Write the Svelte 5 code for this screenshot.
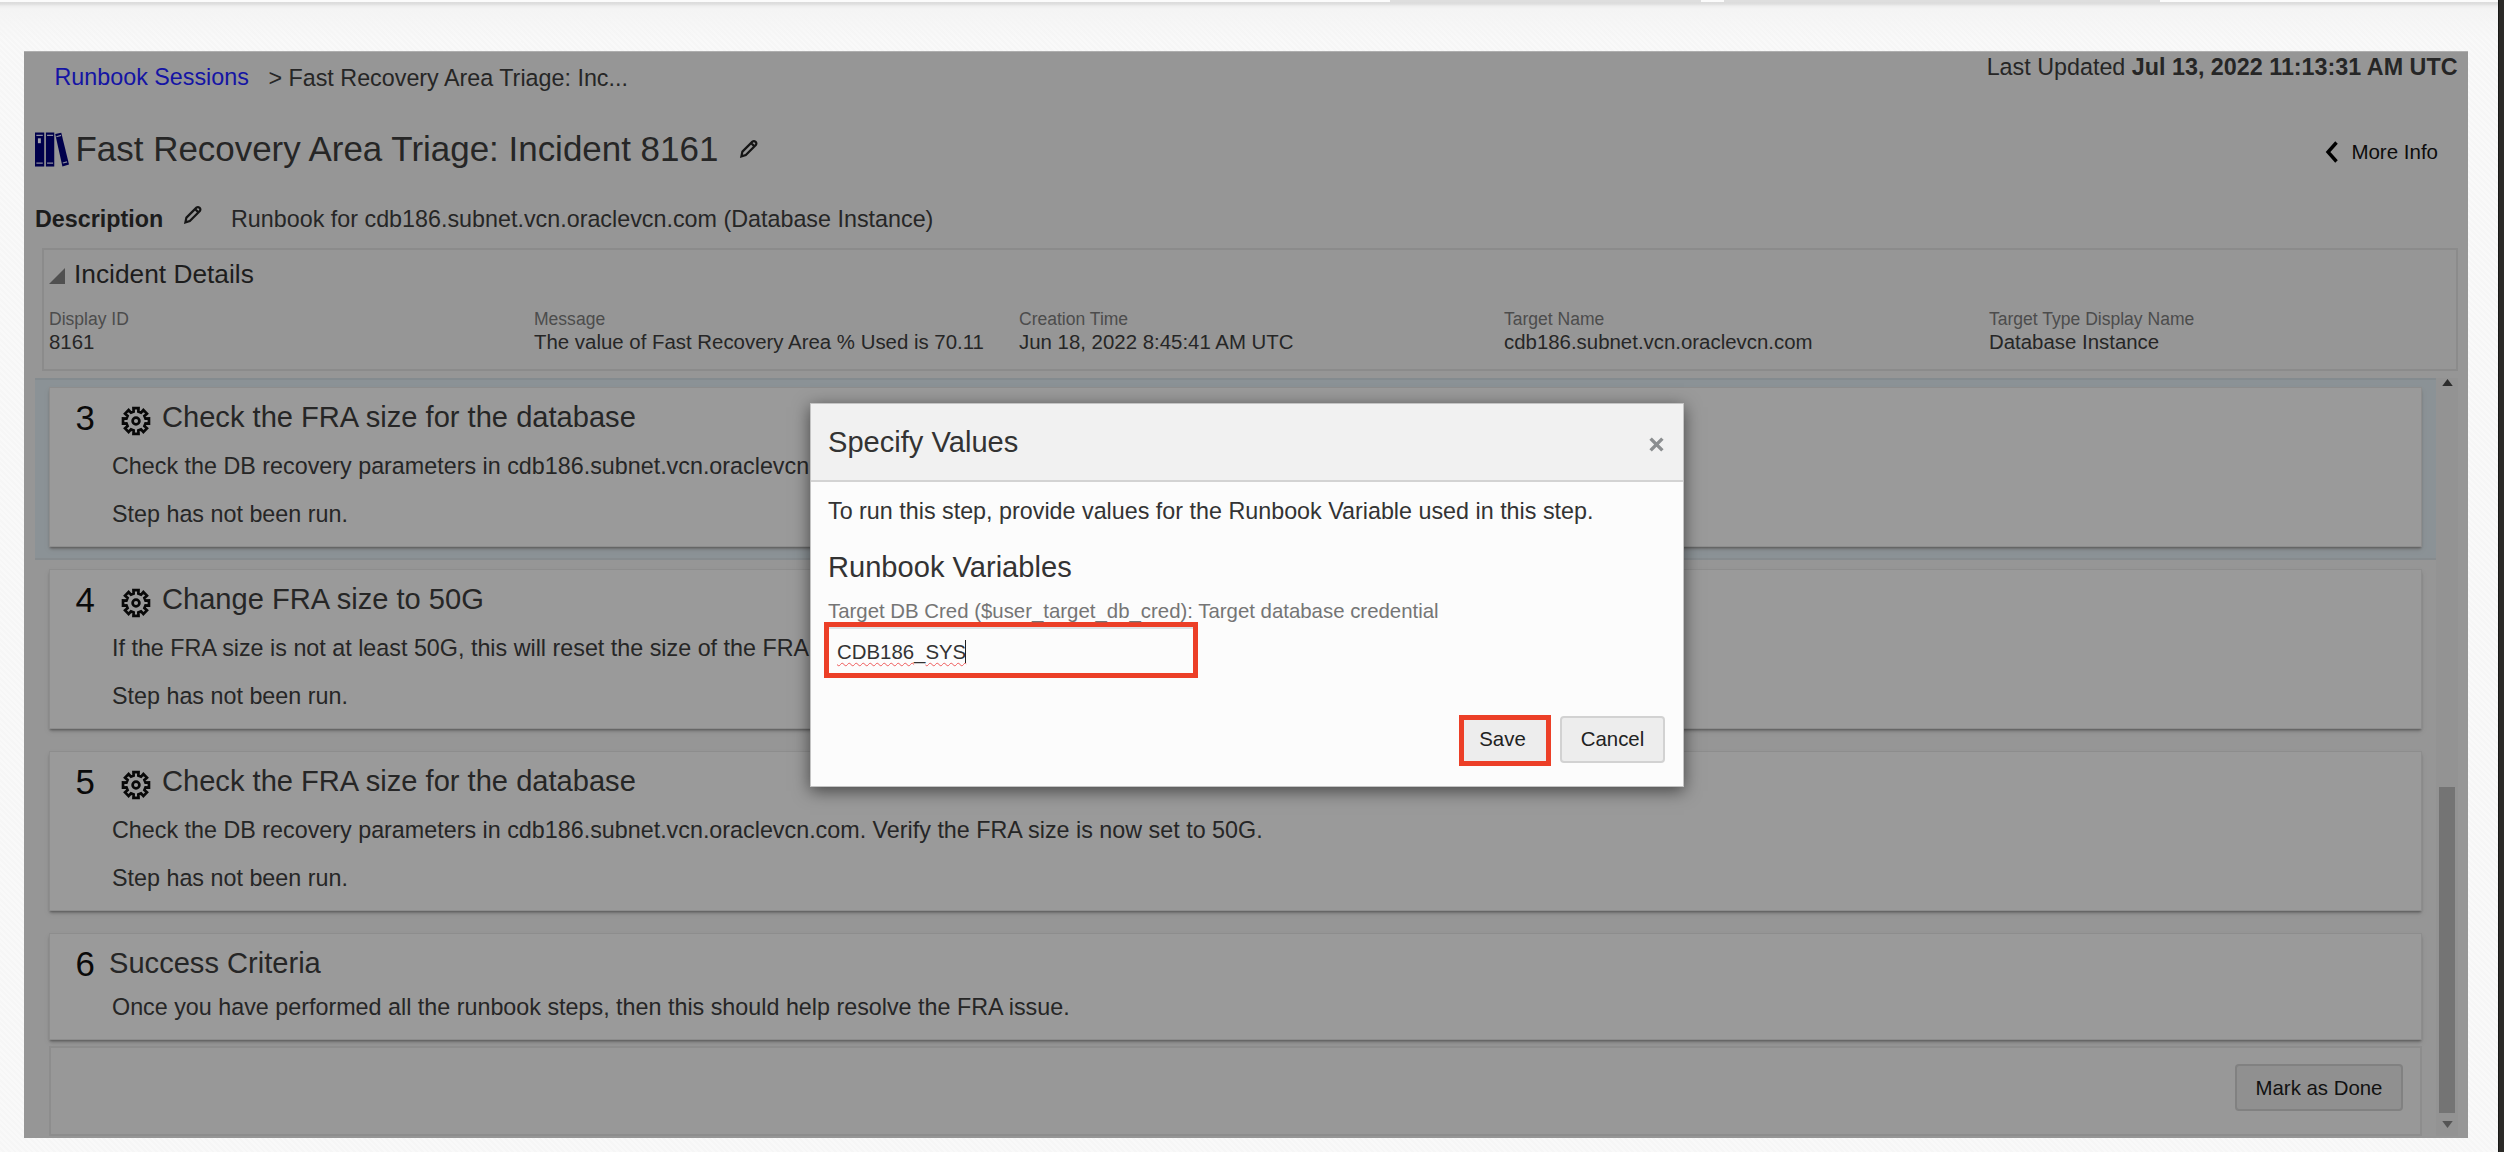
<script>
  const facts = [
    ['Display ID', '8161'],
    ['Message', 'The value of Fast Recovery Area % Used is 70.11'],
    ['Creation Time', 'Jun 18, 2022 8:45:41 AM UTC'],
    ['Target Name', 'cdb186.subnet.vcn.oraclevcn.com'],
    ['Target Type Display Name', 'Database Instance']
  ];
  const steps = [
    { n: 3, title: 'Check the FRA size for the database', active: true, lines: ['Check the DB recovery parameters in cdb186.subnet.vcn.oraclevcn.com.', 'Step has not been run.'] },
    { n: 4, title: 'Change FRA size to 50G', lines: ['If the FRA size is not at least 50G, this will reset the size of the FRA', 'Step has not been run.'] },
    { n: 5, title: 'Check the FRA size for the database', lines: ['Check the DB recovery parameters in cdb186.subnet.vcn.oraclevcn.com. Verify the FRA size is now set to 50G.', 'Step has not been run.'] }
  ];
  let value = $state('CDB186_SYS');

  // Outline of an eight-toothed gear, centred on 16,16
  const gear = Array.from({ length: 8 }, (_, i) => {
    return [[-14, 9.8], [-11, 13.2], [11, 13.2], [14, 9.8]].map(([d, r]) => {
      const a = ((i * 45 + d - 90) * Math.PI) / 180;
      return `${(16 + r * Math.cos(a)).toFixed(2)},${(16 + r * Math.sin(a)).toFixed(2)}`;
    }).join(' ');
  }).join(' ');
</script>

{#snippet pencil()}
  <svg class="pencil" viewBox="0 0 20 20"><path d="M2.4 17.4 L3.4 12.6 L13.4 2.6 Q15 1.4 16.6 2.8 Q18 4.4 16.8 6 L6.8 16 Z M12 4 L15.5 7.4" /></svg>
{/snippet}

<div class="page">
  <div class="topbar"><i></i><i></i></div>
  <main class="panel">
    <header>
      <div class="crumbs"><a href="#sessions">Runbook Sessions</a><span>&gt; Fast Recovery Area Triage: Inc...</span></div>
      <div class="updated">Last Updated <b>Jul 13, 2022 11:13:31 AM UTC</b></div>
    </header>
    <div class="titlebar">
      <svg class="books" viewBox="0 0 36 36">
        <rect x="0" y="0" width="9.5" height="35" /><rect x="11.2" y="0" width="8.6" height="35" />
        <path d="M20.8 1.6 L27 .2 L35 33 L28.2 35 Z" />
        <path class="detail" d="M1.4 3H8M1.4 31.5H8M12.4 3H18.6M12.4 31.5H18.6M22 4.4L26.8 3M28.6 31.4L33 30.2" />
        <rect class="tag" x="3" y="6" width="3" height="5" />
      </svg>
      <h1>Fast Recovery Area Triage: Incident 8161</h1>
      {@render pencil()}
      <div class="more"><svg viewBox="0 0 14 22"><path d="M12.5 1.5 L4 11 L12.5 20.5" /></svg>More Info</div>
    </div>
    <div class="desc"><b>Description</b>{@render pencil()}<span>Runbook for cdb186.subnet.vcn.oraclevcn.com (Database Instance)</span></div>

    <section class="incident">
      <h2><svg viewBox="0 0 16 16"><path d="M16 0V16H0Z" /></svg>Incident Details</h2>
      <dl>
        {#each facts as [k, v]}<div><dt>{k}</dt><dd>{v}</dd></div>{/each}
      </dl>
    </section>

    <div class="scroller">
      <div class="steps">
        {#each steps as s}
          <div class="band" class:active={s.active}>
            <article>
              <div class="head"><span class="num">{s.n}</span>
                <svg class="gear" viewBox="0 0 32 32"><polygon points={gear} /><circle cx="16" cy="16" r="3.4" /></svg>
                <h3>{s.title}</h3></div>
              {#each s.lines as l}<p>{l}</p>{/each}
            </article>
          </div>
        {/each}
        <div class="band last">
          <article>
            <div class="head"><span class="num">6</span><h3>Success Criteria</h3></div>
            <p>Once you have performed all the runbook steps, then this should help resolve the FRA issue.</p>
          </article>
        </div>
        <div class="foot"><button>Mark as Done</button></div>
      </div>
      <div class="track">
        <svg viewBox="0 0 12 8"><path d="M0 8L6 0L12 8Z" /></svg>
        <div class="thumb"></div>
        <svg class="down" viewBox="0 0 12 8"><path d="M0 0L6 8L12 0Z" /></svg>
      </div>
    </div>
  </main>
  <div class="edge"></div>

  <div class="modal">
    <div class="mhead"><h3>Specify Values</h3><svg viewBox="0 0 14 14"><path d="M1.5 1.5L12.5 12.5M12.5 1.5L1.5 12.5" /></svg></div>
    <div class="mbody">
      <p>To run this step, provide values for the Runbook Variable used in this step.</p>
      <h3>Runbook Variables</h3>
      <div class="label">Target DB Cred ($user_target_db_cred): Target database credential</div>
      <div class="field"><span class="misspelt">{value.slice(0, 6)}</span>_<span class="misspelt">{value.slice(7)}</span><i></i></div>
      <div class="actions"><button class="save">Save</button><button>Cancel</button></div>
    </div>
  </div>
</div>

<style>
  :global(body) { margin: 0; overflow: hidden; }
  .page {
    position: relative; box-sizing: border-box; width: 2504px; height: 1152px; overflow: hidden;
    display: grid; grid-template: 51px 1087px 14px / 24px 2444px 30px 6px;
    background: repeating-linear-gradient(45deg, #f9f9f9 0 2px, #f6f6f6 2px 4px); color: #262626;
    font: 23.32px/28px "Liberation Sans", Arial, sans-serif; white-space: nowrap;
  }
  h1, h2, h3, p, dl, dd { margin: 0; font-weight: 400; }
  svg { display: block; fill: none; flex: none; }
  .topbar {
    grid-column: 1 / 4; display: flex; padding-left: 1390px; gap: 23px;
    background: linear-gradient(#fbfbfb 0 2px, #dcdcdc 2px, #dfdfdf 4px, #eee 6px, #f4f4f4 9px, #f4f4f400 40px);
  }
  .topbar i { width: 311px; height: 2px; background: #dedede; }
  .topbar i + i { width: 436px; }
  .edge { grid-column: 4; grid-row: 1 / 4; background: #2b2a27; border-left: 1px solid #171715; box-sizing: border-box; }
  .panel { grid-column: 2; grid-row: 2; box-sizing: border-box; border-top: 1px solid #aeaeae; background: #969696; display: flex; flex-direction: column; }

  header { display: flex; justify-content: space-between; height: 65px; }
  .crumbs { display: flex; padding: 11px 0 0 30.5px; gap: 19.5px; }
  .crumbs a { color: #1414a4; text-decoration: none; }
  .crumbs span { padding-top: 1px; }
  .updated { padding: 1px 10.5px 0 0; }

  .titlebar { display: flex; align-items: center; height: 64px; padding: 0 30px 0 11px; }
  .books { width: 35px; height: 36px; margin-top: 1px; fill: #00004c; }
  .books .detail { stroke: #8d8da0; stroke-width: 1.2; }
  .books .tag { fill: #a0a0aa; }
  h1 { font-size: 34.95px; line-height: 40px; margin: 0 20.5px 0 5.5px; }
  .pencil { width: 20px; height: 20px; stroke: #151515; stroke-width: 2.2; }
  .more { margin-left: auto; display: flex; align-items: center; gap: 13px; font-size: 20.5px; line-height: 24px; color: #0c0c0c; padding-top: 6px; }
  .more svg { width: 14px; height: 22px; stroke: #000; stroke-width: 3.4; }

  .desc { display: flex; height: 67px; padding: 24px 0 0 11px; box-sizing: border-box; }
  .desc b { width: 148px; color: #1c1c1c; }
  .desc .pencil { margin-right: 28px; }

  .incident { box-sizing: border-box; width: 2416px; height: 123px; margin-left: 18px; border: 2px solid #8b8b8b; padding: 9px 0 0 5px; }
  h2 { display: flex; align-items: center; gap: 9px; font-size: 26.3px; line-height: 30px; color: #1d1d1d; }
  h2 svg { width: 16px; height: 16px; fill: #505050; margin-top: 3px; }
  dl { display: grid; grid-template-columns: repeat(5, 485px); padding-top: 20px; }
  dt { font-size: 17.55px; line-height: 21px; color: #4c4c4c; }
  dd { font-size: 20.42px; line-height: 24px; }

  .scroller { display: flex; margin: 7px 10px 0 11px; height: 758px; }
  .steps { width: 2401px; }
  .band { box-sizing: border-box; height: 182px; padding: 10px 15px 0; }
  .active { background: #8b9296; box-shadow: inset 0 2px #848b8f, inset 0 -2px #868b8e; }
  article { box-sizing: border-box; height: 158px; background: #9a9a9a; box-shadow: 0 0 0 1px #8d8d8d, 0 2px 2px #5c5c5c, 0 3px 4px #777; }
  .head { display: flex; height: 54px; padding: 4px 0 0 25.5px; box-sizing: border-box; }
  .num { font-size: 34.8px; line-height: 50px; padding-top: 1px; width: 44px; color: #0a0a0a; }
  .gear { width: 32px; height: 32px; margin: 13px 10.5px 0 0; stroke: #080808; stroke-width: 2.7; }
  h3 { font-size: 29.1px; line-height: 50px; }
  p { line-height: 48px; padding-left: 62px; }
  .last { height: 122px; }
  .last article { height: 105px; }
  .last .head { height: 49px; }
  .last .num { width: 33.5px; }
  .foot { box-sizing: border-box; height: 90px; margin: 0 14px; border: 2px solid #8d8d8d; background: #989898; display: flex; justify-content: flex-end; padding: 16px 17px 0 0; }
  button { box-sizing: border-box; font: 20.4px/24px "Liberation Sans", Arial, sans-serif; height: 47px; width: 168px; padding: 0; border: 2px solid #818181; border-radius: 4px; background: #909090; color: #121212; }
  .track { box-sizing: border-box; width: 22px; background: #939393; display: flex; flex-direction: column; align-items: center; padding: 1px 0 8px; }
  .track svg { width: 11px; height: 7px; fill: #2c2c2c; }
  .track .down { fill: #555; }
  .thumb { width: 16px; height: 326px; margin: auto 0 8px; background: #747474; }

  .modal { position: absolute; left: 810px; top: 403px; width: 874px; height: 384px; box-sizing: border-box; background: #fcfcfc; border: 1px solid #c4c4c4; box-shadow: 0 4px 16px rgba(0, 0, 0, .55); color: #333; }
  .mhead { box-sizing: border-box; height: 78px; padding: 0 19px 0 17px; background: #f1f1f1; border-bottom: 2px solid #d3d3d3; display: flex; align-items: center; justify-content: space-between; }
  .mhead svg { width: 15px; height: 15px; margin-top: 5px; stroke: #8b8e90; stroke-width: 3.2; }
  .mbody { padding: 15px 18px 0 17px; }
  .modal p { line-height: 28px; padding: 0; }
  .mbody h3 { line-height: 34px; margin-top: 25px; }
  .label { font-size: 20.4px; line-height: 24px; color: #757575; margin-top: 15px; }
  .field { box-sizing: border-box; width: 374px; height: 56px; margin: -1px 0 0 -4px; border: 5px solid #ec3f27; padding: 13px 0 0 8px; display: flex; font-size: 20.4px; line-height: 24px; box-shadow: inset 0 2px #dfe3e6; }
  .field i { width: 1px; height: 23px; margin-left: -1px; background: #222; }
  .misspelt { text-decoration: underline wavy #ee5a5a 1px; text-underline-offset: 3px; text-decoration-skip-ink: none; }
  .actions { display: flex; justify-content: flex-end; align-items: center; gap: 9px; margin-top: 35.5px; }
  .actions button { width: 105px; background: #ededed; border-color: #d2d2d2; color: #222; }
  .actions .save { width: 92px; height: 51px; border: 5px solid #ec3f27; border-radius: 0; padding: 0 5px 2px 0; position: relative; top: 1px; }
</style>
